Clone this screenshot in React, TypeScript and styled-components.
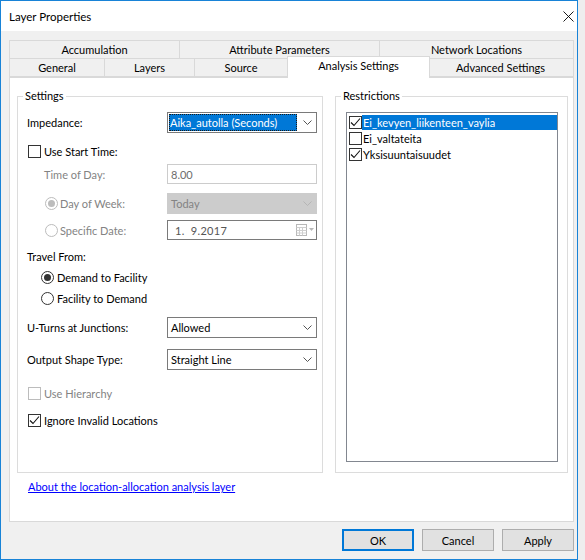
import React from 'react';
import styled, { createGlobalStyle } from 'styled-components';

const GlobalStyle = createGlobalStyle`
  html, body {
    margin: 0;
    padding: 0;
  }
  body {
    background: #eeeeee;
    font-family: Lato, "Liberation Sans", Arial, sans-serif;
    font-size: 11px;
    color: #000;
  }
  * {
    box-sizing: border-box;
  }
`;

const Window = styled.div`
  width: 578px;
  height: 560px;
  border: 1px solid #1883d7;
  background: #f0f0f0;
  display: flex;
  flex-direction: column;
`;

const TitleBar = styled.div`
  height: 30px;
  flex: none;
  background: #fff;
  display: flex;
  align-items: center;
  justify-content: space-between;
  padding-left: 8px;
  font-size: 11.5px;
`;

const CloseButton = styled.div`
  width: 30px;
  height: 30px;
  display: flex;
  align-items: center;
  justify-content: flex-end;
  padding-right: 3px;
`;

const Body = styled.div`
  flex: 1;
  display: flex;
  flex-direction: column;
  padding: 9px 3px 0 8px;
`;

const TabRow = styled.div<{ $cols: string }>`
  display: grid;
  grid-template-columns: ${(p) => p.$cols};
  height: 19px;
  & + & {
    margin-top: -1px;
  }
`;

const Tab = styled.div<{ $active?: boolean }>`
  display: flex;
  align-items: center;
  justify-content: center;
  border: 1px solid #d9d9d9;
  background: ${(p) => (p.$active ? '#fff' : '#f0f0f0')};
  white-space: nowrap;
  & + & {
    margin-left: -1px;
  }
  ${(p) =>
    p.$active &&
    `
    position: relative;
    z-index: 1;
    border-bottom: none;
    margin: -2px -2px -1px -3px;
    padding-bottom: 4px;
  `}
`;

const Panel = styled.div`
  height: 445px;
  background: #fff;
  border: 1px solid #d9d9d9;
  padding: 10px 4px 0 7px;
  display: flex;
  flex-direction: column;
`;

const Columns = styled.div`
  display: grid;
  grid-template-columns: 306px 233px;
  column-gap: 12px;
  height: 385px;
`;

const Group = styled.fieldset<{ $pl: number; $pr: number }>`
  margin: 0;
  min-width: 0;
  border: 1px solid #dcdcdc;
  padding: 0 ${(p) => p.$pr}px 0 ${(p) => p.$pl}px;
`;

const Legend = styled.legend<{ $ml: number }>`
  padding: 0 2px;
  margin-left: ${(p) => p.$ml}px;
  line-height: 16px;
  font-size: 11px;
`;

const FormRow = styled.div<{ $mt: number; $h: number }>`
  display: grid;
  grid-template-columns: 140px 150px;
  align-items: center;
  margin-top: ${(p) => p.$mt}px;
  height: ${(p) => p.$h}px;
`;

const Label = styled.span<{ $disabled?: boolean; $indent?: number }>`
  color: ${(p) => (p.$disabled ? '#838383' : '#000')};
  padding-left: ${(p) => p.$indent ?? 0}px;
  white-space: nowrap;
`;

const OptionRow = styled.div<{ $mt: number; $indent: number; $gap: number }>`
  display: flex;
  align-items: center;
  height: 16px;
  margin-top: ${(p) => p.$mt}px;
  padding-left: ${(p) => p.$indent}px;
  gap: ${(p) => p.$gap}px;
  white-space: nowrap;
`;

const RadioLabel = styled.div<{ $gap: number; $indent: number }>`
  display: flex;
  align-items: center;
  gap: ${(p) => p.$gap}px;
  padding-left: ${(p) => p.$indent}px;
  white-space: nowrap;
`;

const Box = styled.span<{ $disabled?: boolean }>`
  width: 13px;
  height: 13px;
  flex: none;
  border: 1px solid ${(p) => (p.$disabled ? '#bcbcbc' : '#333')};
  background: #fff;
  display: flex;
  align-items: center;
  justify-content: center;
`;

const Radio = styled.span<{ $disabled?: boolean; $checked?: boolean }>`
  width: 13px;
  height: 13px;
  flex: none;
  border-radius: 50%;
  border: 1px solid ${(p) => (p.$disabled ? '#bcbcbc' : '#333')};
  background: #fff;
  display: flex;
  align-items: center;
  justify-content: center;
  &::after {
    content: '';
    display: ${(p) => (p.$checked ? 'block' : 'none')};
    width: 7px;
    height: 7px;
    border-radius: 50%;
    background: ${(p) => (p.$disabled ? '#bcbcbc' : '#333')};
  }
`;

const Combo = styled.div<{ $disabled?: boolean }>`
  height: 21px;
  display: flex;
  align-items: center;
  border: 1px solid ${(p) => (p.$disabled ? '#cccccc' : '#7a7a7a')};
  background: ${(p) => (p.$disabled ? '#cccccc' : '#fff')};
  color: ${(p) => (p.$disabled ? '#838383' : '#000')};
  padding-left: 3px;
`;

const ComboValue = styled.span`
  flex: 1;
  white-space: nowrap;
`;

const Selected = styled.span`
  flex: 1;
  height: 17px;
  margin-left: -2px;
  margin-right: 1px;
  padding-left: 1px;
  display: flex;
  align-items: center;
  background: #0078d7;
  color: #fff;
  outline: 1px dotted #1a1a1a;
  outline-offset: -1px;
  white-space: nowrap;
`;

const Arrow = styled.span`
  width: 18px;
  flex: none;
  display: flex;
  align-items: center;
  justify-content: center;
`;

const TextBox = styled.div<{ $border: string; $color: string }>`
  height: 20px;
  display: flex;
  align-items: center;
  border: 1px solid ${(p) => p.$border};
  background: #fff;
  color: ${(p) => p.$color};
  padding-left: 3px;
  white-space: nowrap;
`;

const DateText = styled.span`
  flex: 1;
  padding-left: 4px;
  letter-spacing: 0.3px;
`;

const ListBox = styled.div`
  margin-top: 8px;
  height: 350px;
  border: 1px solid #828790;
  background: #fff;
  padding: 1px 0 0 1px;
`;

const ListItem = styled.div`
  display: flex;
  align-items: center;
  height: 16px;
  padding-left: 1px;
`;

const ItemText = styled.span<{ $selected?: boolean }>`
  flex: 1;
  height: 15px;
  display: flex;
  align-items: center;
  padding-left: 1px;
  background: ${(p) => (p.$selected ? '#0078d7' : 'transparent')};
  color: ${(p) => (p.$selected ? '#fff' : '#000')};
  white-space: nowrap;
`;

const LinkRow = styled.div`
  margin-top: 6px;
  padding-left: 11px;
  line-height: 16px;
`;

const Link = styled.a`
  color: #0000ff;
  text-decoration: underline;
  cursor: pointer;
`;

const ButtonBar = styled.div`
  display: flex;
  justify-content: flex-end;
  gap: 8px;
  margin-top: 7px;
`;

const Button = styled.button<{ $default?: boolean }>`
  width: 72px;
  height: 22px;
  font-family: inherit;
  font-size: 11px;
  color: #000;
  background: #e1e1e1;
  border: 1px solid ${(p) => (p.$default ? '#0078d7' : '#adadad')};
  box-shadow: ${(p) => (p.$default ? 'inset 0 0 0 1px #0078d7' : 'none')};
  padding: 0;
`;

const Chevron: React.FC<{ color?: string }> = ({ color = '#555' }) => (
  <svg width="9" height="5" viewBox="0 0 9 5">
    <path d="M0.5 0.5 L4.5 4.5 L8.5 0.5" fill="none" stroke={color} strokeWidth="1" />
  </svg>
);

const Check: React.FC = () => (
  <svg width="11" height="11" viewBox="0 0 11 11">
    <path d="M1 5.5 L4 8.5 L10 1.5" fill="none" stroke="#111" strokeWidth="1.1" />
  </svg>
);

const CheckBox: React.FC<{ checked?: boolean; disabled?: boolean }> = ({ checked, disabled }) => (
  <Box $disabled={disabled}>{checked && <Check />}</Box>
);

const CalendarIcon: React.FC = () => (
  <svg width="20" height="12" viewBox="0 0 20 12">
    <rect x="0.5" y="0.5" width="10" height="11" fill="#fff" stroke="#b8b8b8" />
    <path d="M0.5 3.5 H10.5 M3.5 3.5 V11.5 M6.5 3.5 V11.5 M0.5 6.5 H10.5 M0.5 9 H10.5" stroke="#cfcfcf" />
    <path d="M13 4 L18 4 L15.5 7 Z" fill="#b8b8b8" />
  </svg>
);

const restrictions = [
  { name: 'Ei_kevyen_liikenteen_vaylia', checked: true, selected: true },
  { name: 'Ei_valtateita', checked: false, selected: false },
  { name: 'Yksisuuntaisuudet', checked: true, selected: false },
];

const App: React.FC = () => {
  return (
    <>
      <GlobalStyle />
      <Window>
        <TitleBar>
          <span>Layer Properties</span>
          <CloseButton>
            <svg width="11" height="11" viewBox="0 0 11 11">
              <path d="M0.5 0.5 L10.5 10.5 M10.5 0.5 L0.5 10.5" stroke="#000" strokeWidth="0.9" />
            </svg>
          </CloseButton>
        </TitleBar>
        <Body>
          <TabRow $cols="171px 200px 1fr">
            <Tab>Accumulation</Tab>
            <Tab>Attribute Parameters</Tab>
            <Tab>Network Locations</Tab>
          </TabRow>
          <TabRow $cols="96px 90px 93px 140px 1fr">
            <Tab>General</Tab>
            <Tab>Layers</Tab>
            <Tab>Source</Tab>
            <Tab $active>Analysis Settings</Tab>
            <Tab>Advanced Settings</Tab>
          </TabRow>
          <Panel>
            <Columns>
              <Group $pl={9} $pr={5}>
                <Legend $ml={-4}>Settings</Legend>
                <FormRow $mt={8} $h={21}>
                  <Label>Impedance:</Label>
                  <Combo>
                    <Selected>Aika_autolla (Seconds)</Selected>
                    <Arrow>
                      <Chevron />
                    </Arrow>
                  </Combo>
                </FormRow>
                <OptionRow $mt={10} $indent={1} $gap={3}>
                  <CheckBox />
                  <span>Use Start Time:</span>
                </OptionRow>
                <FormRow $mt={5} $h={20}>
                  <Label $disabled $indent={17}>Time of Day:</Label>
                  <TextBox $border="#cccccc" $color="#6d6d6d">8.00</TextBox>
                </FormRow>
                <FormRow $mt={9} $h={21}>
                  <RadioLabel $gap={2} $indent={18}>
                    <Radio $disabled $checked />
                    <Label $disabled>Day of Week:</Label>
                  </RadioLabel>
                  <Combo $disabled>
                    <ComboValue>Today</ComboValue>
                    <Arrow>
                      <Chevron color="#b5b5b5" />
                    </Arrow>
                  </Combo>
                </FormRow>
                <FormRow $mt={6} $h={20}>
                  <RadioLabel $gap={2} $indent={18}>
                    <Radio $disabled />
                    <Label $disabled>Specific Date:</Label>
                  </RadioLabel>
                  <TextBox $border="#7a7a7a" $color="#555">
                    <DateText>1.&nbsp;&nbsp;9.2017</DateText>
                    <CalendarIcon />
                  </TextBox>
                </FormRow>
                <OptionRow $mt={8} $indent={0} $gap={0}>
                  <span>Travel From:</span>
                </OptionRow>
                <OptionRow $mt={5} $indent={14} $gap={3}>
                  <Radio $checked />
                  <span>Demand to Facility</span>
                </OptionRow>
                <OptionRow $mt={5} $indent={14} $gap={3}>
                  <Radio />
                  <span>Facility to Demand</span>
                </OptionRow>
                <FormRow $mt={11} $h={21}>
                  <Label>U-Turns at Junctions:</Label>
                  <Combo>
                    <ComboValue>Allowed</ComboValue>
                    <Arrow>
                      <Chevron />
                    </Arrow>
                  </Combo>
                </FormRow>
                <FormRow $mt={11} $h={21}>
                  <Label>Output Shape Type:</Label>
                  <Combo>
                    <ComboValue>Straight Line</ComboValue>
                    <Arrow>
                      <Chevron />
                    </Arrow>
                  </Combo>
                </FormRow>
                <OptionRow $mt={15} $indent={1} $gap={3}>
                  <CheckBox disabled />
                  <Label $disabled>Use Hierarchy</Label>
                </OptionRow>
                <OptionRow $mt={11} $indent={1} $gap={3}>
                  <CheckBox checked />
                  <span>Ignore Invalid Locations</span>
                </OptionRow>
              </Group>
              <Group $pl={10} $pr={9}>
                <Legend $ml={-5}>Restrictions</Legend>
                <ListBox>
                  {restrictions.map((r) => (
                    <ListItem key={r.name}>
                      <CheckBox checked={r.checked} />
                      <ItemText $selected={r.selected}>{r.name}</ItemText>
                    </ListItem>
                  ))}
                </ListBox>
              </Group>
            </Columns>
            <LinkRow>
              <Link>About the location-allocation analysis layer</Link>
            </LinkRow>
          </Panel>
          <ButtonBar>
            <Button $default>OK</Button>
            <Button>Cancel</Button>
            <Button>Apply</Button>
          </ButtonBar>
        </Body>
      </Window>
    </>
  );
};

export default App;
